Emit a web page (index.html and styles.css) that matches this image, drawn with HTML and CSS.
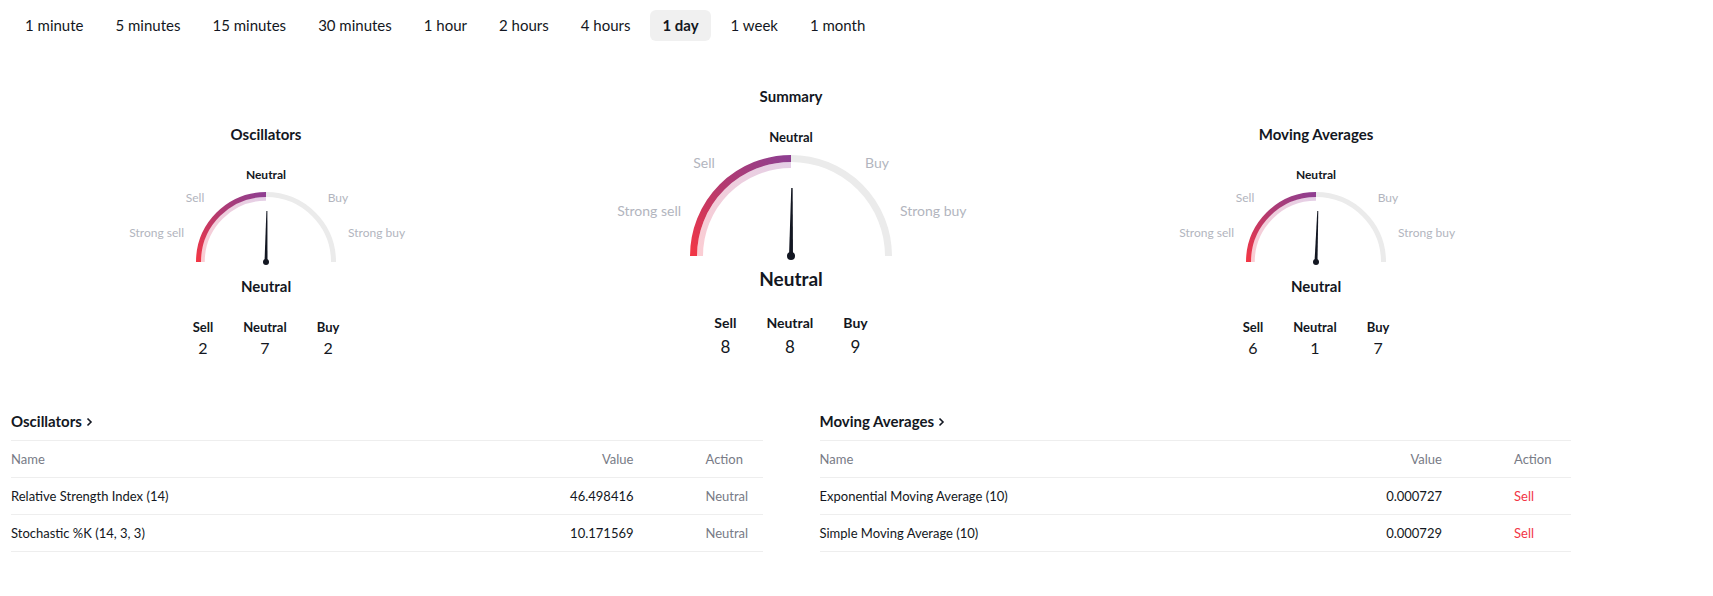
FILE: index.html
```html
<!DOCTYPE html>
<html>
<head>
<meta charset="utf-8">
<link rel="stylesheet" href="styles.css">
</head>
<body>
<div class="page">
  <nav class="tabs">
    <div class="tab">1 minute</div>
    <div class="tab">5 minutes</div>
    <div class="tab">15 minutes</div>
    <div class="tab">30 minutes</div>
    <div class="tab">1 hour</div>
    <div class="tab">2 hours</div>
    <div class="tab">4 hours</div>
    <div class="tab active">1 day</div>
    <div class="tab">1 week</div>
    <div class="tab">1 month</div>
  </nav>

  <section class="gauges">
    <div class="gauge side">
      <div class="g-title">Oscillators</div>
      <svg class="dial" width="300" height="101" viewBox="0 0 300 101">
        <defs>
          <linearGradient id="gs1" x1="0" y1="1" x2="1" y2="0">
            <stop offset="0" stop-color="#f23645"/>
            <stop offset="0.5" stop-color="#b43a6f"/>
            <stop offset="1" stop-color="#8e3f91"/>
          </linearGradient>
          <linearGradient id="gp1" x1="0" y1="1" x2="1" y2="0">
            <stop offset="0" stop-color="#fbcdd3"/>
            <stop offset="1" stop-color="#e4cfe6"/>
          </linearGradient>
        </defs>
        <path class="track" d="M150 29.5 A67.5 67.5 0 0 1 217.5 97" stroke-width="5"/>
        <path d="M86.75 97 A63.25 63.25 0 0 1 150 33.75" fill="none" stroke="url(#gp1)" stroke-width="4"/>
        <path d="M82.5 97 A67.5 67.5 0 0 1 150 29.5" fill="none" stroke="url(#gs1)" stroke-width="5"/>
        <polygon class="needle" points="149.5,46 150.5,46 151.5,97 148.5,97" transform="rotate(1 150 97)"/>
        <circle class="needle" cx="150" cy="97" r="3"/>
        <text class="lbl-top" x="150" y="14" text-anchor="middle">Neutral</text>
        <text class="lbl" x="79" y="37" text-anchor="middle">Sell</text>
        <text class="lbl" x="222" y="37" text-anchor="middle">Buy</text>
        <text class="lbl" x="68" y="72" text-anchor="end">Strong sell</text>
        <text class="lbl" x="232" y="72" text-anchor="start">Strong buy</text>
      </svg>
      <div class="g-status">Neutral</div>
      <div class="counts">
        <div class="count"><span class="c-lbl">Sell</span><span class="c-num">2</span></div>
        <div class="count"><span class="c-lbl">Neutral</span><span class="c-num">7</span></div>
        <div class="count"><span class="c-lbl">Buy</span><span class="c-num">2</span></div>
      </div>
    </div>

    <div class="gauge summary">
      <div class="g-title">Summary</div>
      <svg class="dial" width="360" height="136" viewBox="0 0 360 136">
        <defs>
          <linearGradient id="gs2" x1="0" y1="1" x2="1" y2="0">
            <stop offset="0" stop-color="#f23645"/>
            <stop offset="0.5" stop-color="#b43a6f"/>
            <stop offset="1" stop-color="#8e3f91"/>
          </linearGradient>
          <linearGradient id="gp2" x1="0" y1="1" x2="1" y2="0">
            <stop offset="0" stop-color="#fbcdd3"/>
            <stop offset="1" stop-color="#e4cfe6"/>
          </linearGradient>
        </defs>
        <path class="track" d="M180 32.5 A97.5 97.5 0 0 1 277.5 130" stroke-width="7"/>
        <path d="M89 130 A91 91 0 0 1 180 39" fill="none" stroke="url(#gp2)" stroke-width="6"/>
        <path d="M82.5 130 A97.5 97.5 0 0 1 180 32.5" fill="none" stroke="url(#gs2)" stroke-width="7"/>
        <polygon class="needle" points="179.3,62 180.7,62 182,130 178,130" transform="rotate(0.8 180 130)"/>
        <circle class="needle" cx="180" cy="130" r="4"/>
        <text class="lbl-top big" x="180" y="15.5" text-anchor="middle">Neutral</text>
        <text class="lbl big" x="93" y="42" text-anchor="middle">Sell</text>
        <text class="lbl big" x="266" y="42" text-anchor="middle">Buy</text>
        <text class="lbl big" x="70" y="90" text-anchor="end">Strong sell</text>
        <text class="lbl big" x="289" y="90" text-anchor="start">Strong buy</text>
      </svg>
      <div class="g-status">Neutral</div>
      <div class="counts">
        <div class="count"><span class="c-lbl">Sell</span><span class="c-num">8</span></div>
        <div class="count"><span class="c-lbl">Neutral</span><span class="c-num">8</span></div>
        <div class="count"><span class="c-lbl">Buy</span><span class="c-num">9</span></div>
      </div>
    </div>

    <div class="gauge side">
      <div class="g-title">Moving Averages</div>
      <svg class="dial" width="300" height="101" viewBox="0 0 300 101">
        <defs>
          <linearGradient id="gs3" x1="0" y1="1" x2="1" y2="0">
            <stop offset="0" stop-color="#f23645"/>
            <stop offset="0.5" stop-color="#b43a6f"/>
            <stop offset="1" stop-color="#8e3f91"/>
          </linearGradient>
          <linearGradient id="gp3" x1="0" y1="1" x2="1" y2="0">
            <stop offset="0" stop-color="#fbcdd3"/>
            <stop offset="1" stop-color="#e4cfe6"/>
          </linearGradient>
        </defs>
        <path class="track" d="M150 29.5 A67.5 67.5 0 0 1 217.5 97" stroke-width="5"/>
        <path d="M86.75 97 A63.25 63.25 0 0 1 150 33.75" fill="none" stroke="url(#gp3)" stroke-width="4"/>
        <path d="M82.5 97 A67.5 67.5 0 0 1 150 29.5" fill="none" stroke="url(#gs3)" stroke-width="5"/>
        <polygon class="needle" points="149.5,46 150.5,46 151.5,97 148.5,97" transform="rotate(2 150 97)"/>
        <circle class="needle" cx="150" cy="97" r="3"/>
        <text class="lbl-top" x="150" y="14" text-anchor="middle">Neutral</text>
        <text class="lbl" x="79" y="37" text-anchor="middle">Sell</text>
        <text class="lbl" x="222" y="37" text-anchor="middle">Buy</text>
        <text class="lbl" x="68" y="72" text-anchor="end">Strong sell</text>
        <text class="lbl" x="232" y="72" text-anchor="start">Strong buy</text>
      </svg>
      <div class="g-status">Neutral</div>
      <div class="counts">
        <div class="count"><span class="c-lbl">Sell</span><span class="c-num">6</span></div>
        <div class="count"><span class="c-lbl">Neutral</span><span class="c-num">1</span></div>
        <div class="count"><span class="c-lbl">Buy</span><span class="c-num">7</span></div>
      </div>
    </div>
  </section>

  <section class="tables">
    <div class="tbl">
      <div class="t-title">Oscillators <svg class="chev" width="7" height="10" viewBox="0 0 7 10"><path d="M1.5 1.5 L5 5 L1.5 8.5" fill="none" stroke="#131722" stroke-width="1.6"/></svg></div>
      <div class="row head"><span>Name</span><span class="val">Value</span><span class="act">Action</span></div>
      <div class="row"><span>Relative Strength Index (14)</span><span class="val">46.498416</span><span class="act neutral">Neutral</span></div>
      <div class="row"><span>Stochastic %K (14, 3, 3)</span><span class="val">10.171569</span><span class="act neutral">Neutral</span></div>
    </div>
    <div class="tbl">
      <div class="t-title">Moving Averages <svg class="chev" width="7" height="10" viewBox="0 0 7 10"><path d="M1.5 1.5 L5 5 L1.5 8.5" fill="none" stroke="#131722" stroke-width="1.6"/></svg></div>
      <div class="row head"><span>Name</span><span class="val">Value</span><span class="act">Action</span></div>
      <div class="row"><span>Exponential Moving Average (10)</span><span class="val">0.000727</span><span class="act sell">Sell</span></div>
      <div class="row"><span>Simple Moving Average (10)</span><span class="val">0.000729</span><span class="act sell">Sell</span></div>
    </div>
  </section>
</div>
</body>
</html>
```

FILE: styles.css
```css
html, body {
  margin: 0;
  padding: 0;
  background: #ffffff;
}
body {
  font-family: Lato, "Noto Sans", "Liberation Sans", sans-serif;
  color: #131722;
}
.page {
  width: 1560px;
  margin-left: 11px;
}
.tabs {
  display: flex;
  gap: 8px;
  padding-top: 10px;
  margin-left: 2px;
}
.tab {
  height: 31px;
  line-height: 31px;
  padding: 0 12px;
  font-size: 15px;
  border-radius: 6px;
  white-space: nowrap;
}
.tab.active {
  background: #f0f0f0;
  font-weight: 700;
}
.gauges {
  display: flex;
  justify-content: space-between;
  align-items: flex-end;
  margin-top: 46px;
}
.gauge {
  display: flex;
  flex-direction: column;
  align-items: center;
}
.gauge.side {
  width: 510px;
}
.g-title {
  font-size: 15px;
  font-weight: 700;
  line-height: 18px;
}
.side .dial {
  margin-top: 22px;
}
.summary .dial {
  margin-top: 21px;
}
.dial {
  display: block;
  overflow: visible;
}
.track {
  fill: none;
  stroke: #ebebeb;
}
.needle {
  fill: #131722;
}
.lbl {
  font-size: 12px;
  fill: #b2b5be;
}
.lbl.big {
  font-size: 14px;
}
.lbl-top {
  font-size: 12px;
  font-weight: 700;
  fill: #131722;
}
.lbl-top.big {
  font-size: 13px;
}
.g-status {
  font-size: 15px;
  font-weight: 700;
  line-height: 20px;
  margin-top: 10px;
}
.summary .g-status {
  font-size: 19px;
  line-height: 24px;
  margin-top: 5px;
}
.counts {
  display: flex;
  gap: 30px;
  margin-top: 23px;
}
.count {
  display: flex;
  flex-direction: column;
  align-items: center;
}
.c-lbl {
  font-size: 13px;
  font-weight: 700;
  line-height: 16px;
}
.c-num {
  font-size: 16px;
  line-height: 20px;
  margin-top: 3px;
}
.summary .c-lbl {
  font-size: 14px;
  line-height: 17px;
}
.summary .c-num {
  font-size: 17px;
  line-height: 22px;
  margin-top: 5px;
}
.tables {
  display: grid;
  grid-template-columns: 1fr 1fr;
  column-gap: 57px;
  margin-top: 54px;
}
.t-title {
  font-size: 15px;
  font-weight: 700;
  line-height: 18px;
  padding-bottom: 10px;
  border-bottom: 1px solid #eeeeee;
  display: flex;
  align-items: center;
  gap: 4px;
}
.chev {
  display: block;
  margin-top: 1px;
}
.row {
  display: grid;
  grid-template-columns: 1fr 150px 129px;
  height: 36px;
  align-items: center;
  font-size: 13px;
  border-bottom: 1px solid #eeeeee;
}
.row.head {
  color: #787b86;
}
.val {
  text-align: right;
}
.act {
  padding-left: 72px;
}
.neutral {
  color: #787b86;
}
.sell {
  color: #f23645;
}
```
